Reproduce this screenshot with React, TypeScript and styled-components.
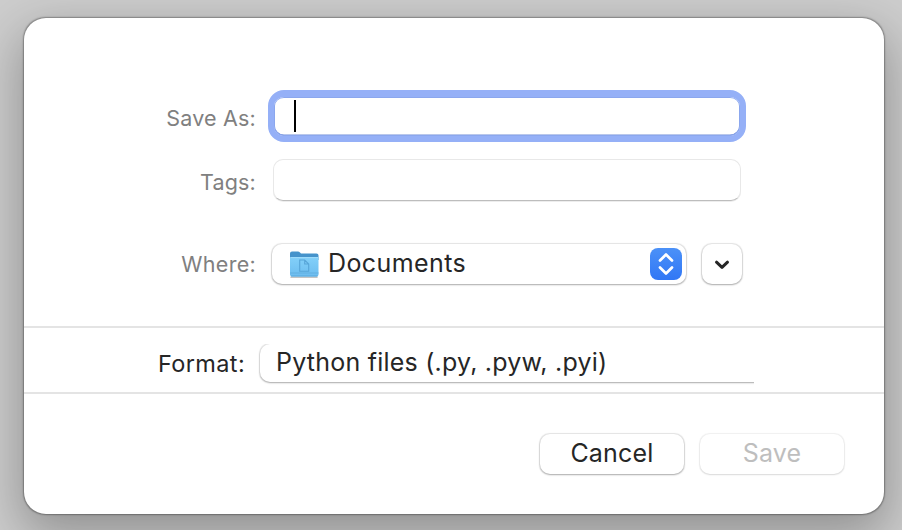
import React from "react";
import styled, { createGlobalStyle, css } from "styled-components";

const GlobalStyle = createGlobalStyle`
  * { box-sizing: border-box; }
  html, body { margin: 0; padding: 0; overflow: hidden; }
  body { font-family: Inter, "Liberation Sans", sans-serif; }
`;

const Desktop = styled.main`
  width: 902px;
  height: 530px;
  padding: 18px 18px 16px 24px;
  overflow: hidden;
  background: #cdcdcd;
`;

const Sheet = styled.section`
  width: 860px;
  height: 496px;
  display: flex;
  flex-direction: column;
  background: #fff;
  border-radius: 22px;
  box-shadow: 0 0 1.5px 0.5px rgba(0, 0, 0, 0.32), 0 18px 50px 4px rgba(0, 0, 0, 0.29);
`;

const Fields = styled.div`
  height: 308px;
  padding-top: 72px;
`;

const Row = styled.div<{ $height: number; $gap?: number; $after?: number }>`
  display: flex;
  align-items: center;
  height: ${(p) => p.$height}px;
  margin-bottom: ${(p) => p.$after ?? 0}px;
  gap: ${(p) => p.$gap ?? 0}px;
`;

const Label = styled.label<{ $width: number; $strong?: boolean; $spacing?: number; $drop?: number }>`
  width: ${(p) => p.$width}px;
  flex: none;
  text-align: right;
  white-space: nowrap;
  font-size: ${(p) => (p.$strong ? 23.5 : 21.5)}px;
  line-height: 30px;
  letter-spacing: ${(p) => p.$spacing ?? 0}px;
  padding-top: ${(p) => p.$drop ?? 0}px;
  color: ${(p) => (p.$strong ? "#262626" : "#808080")};
`;

const raised = css`
  background: #fff;
  box-shadow: 0 0 1px 0.5px rgba(0, 0, 0, 0.1), 0 1px 2px rgba(0, 0, 0, 0.26);
`;

const FocusField = styled.div`
  width: 478px;
  height: 52px;
  padding: 3px 0 0 20px;
  border: 6px solid #95b0f7;
  border-top-width: 7px;
  border-radius: 16px;
  background: #fff;
  box-shadow: inset 0 0 0 1px #8ba7ee, inset 0 -1.5px 0 #7590d8;
`;

const Caret = styled.div`
  width: 2px;
  height: 32px;
  background: #000;
`;

const TagField = styled.div`
  width: 468px;
  height: 42px;
  border: 1px solid #e8e8e8;
  border-bottom: 1.5px solid #bdbdbd;
  border-radius: 10px;
  background: #fff;
  box-shadow: 0 1px 0 rgba(0, 0, 0, 0.07);
`;

const Popup = styled.div`
  ${raised}
  display: flex;
  align-items: center;
  width: 414px;
  height: 40px;
  padding: 0 4px 0 16px;
  border-radius: 10px;
`;

const Value = styled.span<{ $spacing?: number; $lift?: number }>`
  flex: 1;
  color: #262626;
  font-size: 25px;
  line-height: 32px;
  white-space: nowrap;
  letter-spacing: ${(p) => p.$spacing ?? 0}px;
  padding-bottom: ${(p) => p.$lift ?? 0}px;
`;

const Stepper = styled.span`
  display: flex;
  width: 32px;
  height: 32px;
  border-radius: 8px;
  background: linear-gradient(#4b91f8, #3177f5);
`;

const Disclosure = styled.button`
  ${raised}
  display: flex;
  width: 40px;
  height: 40px;
  padding: 0;
  border: 0;
  border-radius: 10px;
`;

const Accessory = styled.div`
  display: flex;
  height: 68px;
  padding-top: 14px;
  border-top: 2px solid #e4e4e4;
  border-bottom: 2px solid #e4e4e4;
`;

const FormatClip = styled.div`
  width: 499px;
  height: 44px;
  padding: 2px 0 0 5px;
  margin-left: 10px;
  overflow: hidden;
  clip-path: inset(2px 0 0 0);
`;

const FormatPopup = styled.div`
  ${raised}
  width: 520px;
  height: 38px;
  padding: 2px 0 0 16px;
  border-radius: 10px;
`;

const Footer = styled.footer`
  display: flex;
  justify-content: flex-end;
  gap: 16px;
  padding: 40px 40px 0 0;
`;

const Button = styled.button<{ $faded?: boolean }>`
  ${raised}
  width: 144px;
  height: 40px;
  padding: 0 0 2px;
  border: 0;
  border-radius: 10px;
  font: 25px/38px Inter, "Liberation Sans", sans-serif;
  letter-spacing: 0.2px;
  color: #262626;
  ${(p) =>
    p.$faded &&
    css`
      color: #bebebe;
      box-shadow: 0 0 1px 0.5px rgba(0, 0, 0, 0.06), 0 1px 2px rgba(0, 0, 0, 0.1);
    `}
`;

const FolderSvg = styled.svg`
  flex: none;
  margin-right: 8px;
`;

const Folder = () => (
  <FolderSvg width="32" height="32" viewBox="0 0 32 32">
    <defs>
      <linearGradient id="front" x1="0" y1="0" x2="0" y2="1">
        <stop offset="0" stopColor="#83d0f9" />
        <stop offset="1" stopColor="#6cbdf0" />
      </linearGradient>
    </defs>
    <path d="M2.4 29.2h27.2" stroke="#000" strokeOpacity=".25" strokeWidth="1.5" />
    <path d="M2 5.5Q2 3.5 4 3.5H10Q11 3.5 12 4.5L13 5.5H28.5Q30.5 5.5 30.5 7.5V12H2Z" fill="#4593cb" />
    <path d="M2 9.8Q2 9 3 9H29.5Q30.5 9 30.5 9.8V26.5Q30.5 28.5 28.5 28.5H4Q2 28.5 2 26.5Z" fill="url(#front)" />
    <path d="M2.5 9.6H30" stroke="#a0dcfa" />
    <path d="M2 25H30.5" stroke="#62aee0" />
    <path d="M3 28H29.5" stroke="#5ba8da" />
    <path d="M11.7 12H16.7L20.7 16V23.3H11.7ZM16.7 12V16H20.7" fill="none" stroke="#57a5d8" strokeWidth="1.1" />
  </FolderSvg>
);

export default function App() {
  return (
    <>
      <GlobalStyle />
      <Desktop>
        <Sheet>
          <Fields>
            <Row $height={52} $after={17} $gap={12}>
              <Label $width={232} $spacing={0.2} $drop={4}>Save As:</Label>
              <FocusField>
                <Caret />
              </FocusField>
            </Row>
            <Row $height={42} $after={43} $gap={17}>
              <Label $width={232} $spacing={0.2} $drop={4}>Tags:</Label>
              <TagField />
            </Row>
            <Row $height={40} $gap={16}>
              <Label $width={232} $spacing={0.3}>Where:</Label>
              <Popup>
                <Folder />
                <Value $spacing={0.4} $lift={2}>Documents</Value>
                <Stepper>
                  <svg width="32" height="32" fill="none" stroke="#fff" strokeWidth="2.7" strokeLinecap="round" strokeLinejoin="round">
                    <path d="M10 12.5L16 6.5L22 12.5M10 19.5L16 25.5L22 19.5" />
                  </svg>
                </Stepper>
              </Popup>
              <Disclosure aria-label="Expand">
                <svg width="40" height="40" fill="none" stroke="#262626" strokeWidth="3" strokeLinecap="round" strokeLinejoin="round">
                  <path d="M14.5 18.2L20 23.4L25.5 18.2" />
                </svg>
              </Disclosure>
            </Row>
          </Fields>
          <Accessory>
            <Label $width={221} $strong $drop={7} $spacing={0.35}>Format:</Label>
            <FormatClip>
              <FormatPopup>
                <Value $spacing={0.22}>Python files (.py, .pyw, .pyi)</Value>
              </FormatPopup>
            </FormatClip>
          </Accessory>
          <Footer>
            <Button>Cancel</Button>
            <Button $faded>Save</Button>
          </Footer>
        </Sheet>
      </Desktop>
    </>
  );
}
